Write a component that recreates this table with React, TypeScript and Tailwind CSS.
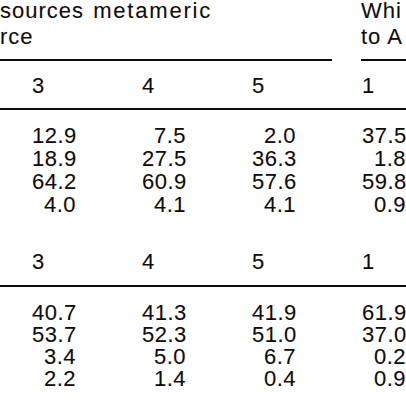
const groups = [
  {
    rows: [
      ["12.9", "7.5", "2.0", "37.5"],
      ["18.9", "27.5", "36.3", "1.8"],
      ["64.2", "60.9", "57.6", "59.8"],
      ["4.0", "4.1", "4.1", "0.9"],
    ],
  },
  {
    rows: [
      ["40.7", "41.3", "41.9", "61.9"],
      ["53.7", "52.3", "51.0", "37.0"],
      ["3.4", "5.0", "6.7", "0.2"],
      ["2.2", "1.4", "0.4", "0.9"],
    ],
  },
];

const heads = ["3", "4", "5", "1"];

function HeadRow({ className = "" }: { className?: string }) {
  return (
    <div className={`flex gap-[66px] pl-[32px] h-[23px] leading-[23px] ${className}`}>
      {heads.map((h, i) => (
        <div key={i} className="w-[44px] shrink-0 text-left">
          {h}
        </div>
      ))}
    </div>
  );
}

function DataRows({ rows, rowH }: { rows: string[][]; rowH: string }) {
  return (
    <div className="flex flex-col">
      {rows.map((r, i) => (
        <div key={i} className={`flex gap-[66px] pl-[32px] ${rowH}`}>
          {r.map((v, j) => (
            <div key={j} className="w-[44px] shrink-0 text-right whitespace-nowrap">
              {v}
            </div>
          ))}
        </div>
      ))}
    </div>
  );
}

export default function App() {
  return (
    <div
      className="w-[406px] h-[406px] overflow-hidden bg-white text-[#0d0d0d] text-[22px] tracking-[0.5px] [-webkit-text-stroke:0.1px_#0d0d0d]"
      style={{ fontFamily: '"Liberation Sans", Arial, sans-serif' }}
    >
      {/* spanning headers */}
      <div className="flex whitespace-nowrap tracking-[1px]">
        <div className="w-[332px] shrink-0">
          <div className="h-[22px] leading-[22px]">
            sources <span className="ml-[2px] tracking-[1.8px]">metameric</span>
          </div>
          <div className="mt-[4px] h-[22px] leading-[22px]">rce</div>
        </div>
        <div className="ml-[29px] shrink-0">
          <div className="h-[22px] leading-[22px]">Whi</div>
          <div className="mt-[4px] h-[22px] leading-[22px]">to A</div>
        </div>
      </div>
      <div className="flex mt-[11px]">
        <div className="w-[332px] h-[2px] bg-[#0d0d0d]" />
        <div className="ml-[29px] flex-1 h-[2px] bg-[#0d0d0d]" />
      </div>

      <HeadRow className="mt-[13px]" />
      <div className="mt-[11px] h-[2px] bg-[#0d0d0d]" />
      <div className="mt-[14px]">
        <DataRows rows={groups[0].rows} rowH="h-[23px] leading-[23px]" />
      </div>

      <HeadRow className="mt-[34px]" />
      <div className="mt-[12px] h-[2px] bg-[#0d0d0d]" />
      <div className="mt-[15px]">
        <DataRows rows={groups[1].rows} rowH="h-[22px] leading-[22px]" />
      </div>
    </div>
  );
}
